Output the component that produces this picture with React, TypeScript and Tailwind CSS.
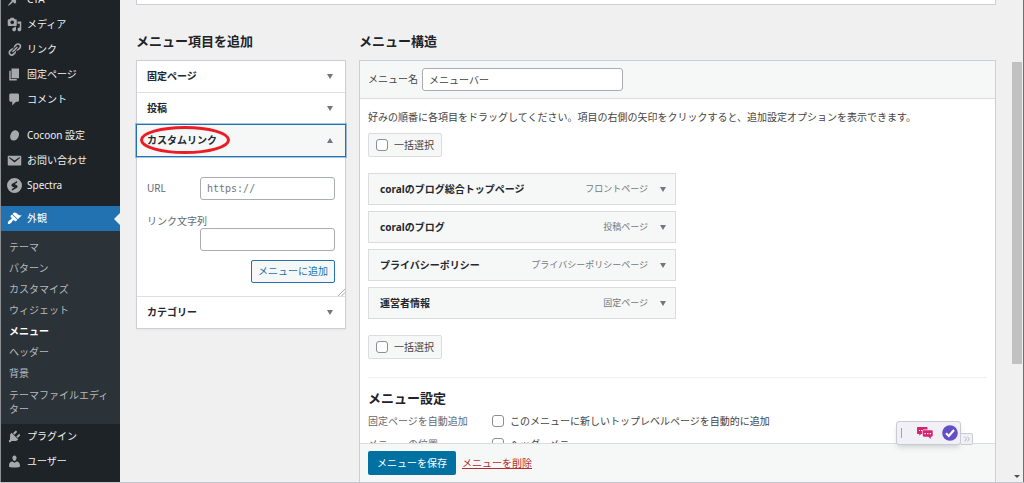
import React from "react";

const ICONS = {
  pin: "M10.44 3.02l1.82-1.82 6.36 6.35-1.83 1.82c-1.05-.68-2.48-.57-3.41.36l-.75.75c-.92.93-1.04 2.35-.35 3.41l-1.83 1.82-2.41-2.41-2.8 2.79c-.42.42-3.38 2.71-3.8 2.29s1.86-3.39 2.28-3.81l2.79-2.79L4.1 9.36l1.83-1.82c1.05.69 2.48.57 3.4-.36l.75-.75c.93-.92 1.05-2.35.36-3.41z",
  media:
    "M13 11V4c0-.55-.45-1-1-1h-1.67L9 1H5L3.67 3H2c-.55 0-1 .45-1 1v7c0 .55.45 1 1 1h10c.55 0 1-.45 1-1zM7 4.5c1.38 0 2.5 1.12 2.5 2.5S8.38 9.5 7 9.5 4.5 8.38 4.5 7 5.62 4.5 7 4.5zM14 6h5v10.5c0 1.38-1.12 2.5-2.5 2.5S14 17.88 14 16.5s1.12-2.5 2.5-2.5c.17 0 .34.02.5.05V9h-3V6zm-4 8.05V13h2v3.5c0 1.38-1.12 2.5-2.5 2.5S7 17.88 7 16.5 8.12 14 9.5 14c.17 0 .34.02.5.05z",
  link: "M17.74 2.76c1.68 1.69 1.68 4.41 0 6.1l-1.53 1.52c-1.12 1.12-2.7 1.47-4.14 1.09l2.62-2.61.76-.77.76-.76c.84-.84.84-2.2 0-3.04-.84-.85-2.2-.85-3.04 0l-.77.76-3.38 3.38c-.37-1.44-.02-3.02 1.1-4.14l1.52-1.53c1.69-1.68 4.42-1.68 6.1 0zM8.59 13.43l5.34-5.34c.42-.42.42-1.1 0-1.52-.44-.43-1.13-.39-1.53 0l-5.33 5.34c-.42.42-.42 1.1 0 1.52.44.43 1.13.39 1.52 0zm-.76 2.29l4.14-4.15c.38 1.44.03 3.02-1.09 4.14l-1.52 1.53c-1.69 1.68-4.41 1.68-6.1 0-1.68-1.68-1.68-4.42 0-6.1l1.53-1.52c1.12-1.12 2.7-1.47 4.14-1.1l-4.14 4.15c-.85.84-.85 2.2 0 3.05.84.84 2.2.84 3.04 0z",
  page: "M6 15V2h10v13H6zm-1 1h8v2H3V5h2v11z",
  comment:
    "M5 2h9c1.1 0 2 .9 2 2v7c0 1.1-.9 2-2 2h-2l-5 5v-5H5c-1.1 0-2-.9-2-2V4c0-1.1.9-2 2-2z",
  cocoon:
    "M12.5 3.2c3 .8 4.2 4 3.2 7.6-1.1 4-4.3 6.6-7.6 5.9-3.2-.7-4.7-3.9-3.6-7.5C5.7 5 9.2 2.3 12.5 3.2z",
  mail: "M2 3.5h16c.6 0 1 .4 1 1v11c0 .6-.4 1-1 1H2c-.6 0-1-.4-1-1v-11c0-.6.4-1 1-1zm8 9.2l7-5.7c.5-.6-.2-1.500-1-1.100l-6 4-6-4c-.8-.4-1.500.5-1 1.100z",
  spectra:
    "M10 0a10 10 0 1 1 0 20 10 10 0 0 1 0-20zm3.5 4L7 7.700c-1.500 1-1.500 2.700-.2 3.500l3 1.600L6.500 14.600V17l6.300-3.600c1.700-1 1.700-2.900.2-3.800l-2.800-1.500 3.300-1.900z",
  appearance:
    "M14.48 11.06L7.41 3.99l1.5-1.5c.5-.56 2.3-.47 3.51.32 1.21.8 1.43 1.28 2.91 2.1 1.18.64 2.45 1.26 4.45.85zm-.71.71L6.7 4.7 4.93 6.47c-.39.39-.39 1.02 0 1.41l1.06 1.06c.39.39.39 1.03 0 1.42-.6.6-1.43 1.11-2.21 1.69-.35.26-.7.53-1.01.84C1.43 14.23.4 16.08 1.4 17.07c.99 1 2.84-.03 4.18-1.36.31-.31.58-.66.85-1.02.57-.78 1.08-1.61 1.69-2.21.39-.39 1.02-.39 1.41 0l1.06 1.06c.39.39 1.02.39 1.41 0z",
  plugin:
    "M13.11 4.36L9.87 7.6 8 5.73l3.24-3.24c.35-.34 1.05-.2 1.56.32.52.51.66 1.21.31 1.55zm-8 1.77l.91-1.12 9.01 9.01-1.19.84c-.71.71-2.63 1.16-3.82 1.16H6.14L4.9 17.26c-.59.59-1.54.59-2.12 0-.59-.58-.59-1.53 0-2.12l1.24-1.24v-3.88c0-1.13.4-3.19 1.09-3.89zm7.26 3.97l3.24-3.24c.34-.35 1.04-.21 1.55.31.52.51.66 1.21.31 1.55l-3.24 3.25z",
  user: "M10 9.25c-2.27 0-2.73-3.44-2.73-3.44C7 4.02 7.82 2 9.97 2c2.16 0 2.98 2.02 2.71 3.81 0 0-.41 3.44-2.68 3.44zm0 2.57L12.72 10c2.39 0 4.52 2.33 4.52 4.53v2.49s-3.65 1.13-7.24 1.13c-3.65 0-7.24-1.13-7.24-1.13v-2.49c0-2.25 1.94-4.48 4.47-4.48z",
};

type IconName = keyof typeof ICONS;

const contentLinks: { icon: IconName; label: string }[] = [
  { icon: "media", label: "メディア" },
  { icon: "link", label: "リンク" },
  { icon: "page", label: "固定ページ" },
  { icon: "comment", label: "コメント" },
];

const pluginLinks: { icon: IconName; label: string }[] = [
  { icon: "cocoon", label: "Cocoon 設定" },
  { icon: "mail", label: "お問い合わせ" },
  { icon: "spectra", label: "Spectra" },
];

const subLinks = [
  "テーマ",
  "パターン",
  "カスタマイズ",
  "ウィジェット",
  "メニュー",
  "ヘッダー",
  "背景",
];

const menuItems = [
  { title: "coralのブログ総合トップページ", type: "フロントページ" },
  { title: "coralのブログ", type: "投稿ページ" },
  { title: "プライバシーポリシー", type: "プライバシーポリシーページ" },
  { title: "運営者情報", type: "固定ページ" },
];

function SideLink({
  icon,
  label,
  active,
}: {
  icon: IconName;
  label: string;
  active?: boolean;
}) {
  return (
    <a
      href="#"
      className={`relative flex h-[25px] shrink-0 items-center gap-[5px] pl-1.5 text-[10px] ${
        active ? "bg-[#2271b1] text-white" : "text-[#f0f0f1]"
      }`}
    >
      <svg
        viewBox="0 0 20 20"
        className={`size-[15px] ${active ? "text-white" : "text-[#a7aaad]"}`}
        fill="currentColor"
        fillRule="evenodd"
      >
        <path d={ICONS[icon]} />
      </svg>
      {label}
      {active && (
        <span className="absolute top-1/2 right-0 -translate-y-1/2 border-y-6 border-r-6 border-y-transparent border-r-[#f0f0f1]" />
      )}
    </a>
  );
}

function Sidebar() {
  return (
    <nav className="w-30 shrink-0 border-l border-[#8c8f94] bg-[#1d2327]">
      {/* the list is scrolled, only the tail of the first entry shows */}
      <div className="flex h-3 flex-col justify-end overflow-hidden">
        <SideLink icon="pin" label="CTA" />
      </div>
      {contentLinks.map((item) => (
        <SideLink key={item.label} {...item} />
      ))}
      <div className="pt-[11px] pb-2">
        {pluginLinks.map((item) => (
          <SideLink key={item.label} {...item} />
        ))}
      </div>
      <SideLink icon="appearance" label="外観" active />
      <div className="bg-[#2c3338] pt-1.5 pb-1 pl-2 text-[10px] text-[#b4b9be]">
        {subLinks.map((label) => (
          <a
            key={label}
            href="#"
            className={`flex h-[21px] items-center ${
              label === "メニュー" ? "font-bold text-white" : ""
            }`}
          >
            {label}
          </a>
        ))}
        <a href="#" className="block w-[102px] py-1 leading-[14px]">
          テーマファイルエディター
        </a>
      </div>
      <SideLink icon="plugin" label="プラグイン" />
      <SideLink icon="user" label="ユーザー" />
    </nav>
  );
}

function Arrow({ up }: { up?: boolean }) {
  return (
    <svg viewBox="0 0 6 5" className="h-[5px] w-1.5 shrink-0" fill="#72777c">
      <path d={up ? "M0 5h6L3 0z" : "M0 0h6L3 5z"} />
    </svg>
  );
}

function SectionButton({ label }: { label: string }) {
  return (
    <button className="flex h-[31px] w-full items-center justify-between pr-3 pl-2.5 text-[10px] font-bold text-[#23282d]">
      {label}
      <Arrow />
    </button>
  );
}

function AddItems() {
  return (
    <section className="w-[210px] shrink-0">
      <h2 className="text-[13px] leading-5 font-bold text-[#1d2327]">
        メニュー項目を追加
      </h2>
      <div className="mt-[9px] border border-[#ccd0d4] bg-white shadow-xs">
        <SectionButton label="固定ページ" />
        <div className="border-t border-[#dfdfdf]">
          <SectionButton label="投稿" />
        </div>
        <button className="relative -mx-px flex h-[33px] w-[210px] items-center justify-between border border-[#2271b1] bg-[#f6f7f7] pr-3 pl-2.5 text-[10px] font-bold text-[#23282d] ring-1 ring-[#2271b1]/40">
          カスタムリンク
          <Arrow up />
          <svg
            viewBox="0 0 92 30"
            className="absolute top-0 left-0.5 h-[30px] w-[92px]"
            fill="none"
            stroke="#ed1c24"
            strokeWidth="3"
          >
            <ellipse cx="46" cy="15" rx="43.5" ry="12.5" />
          </svg>
        </button>
        <div className="relative px-2.5 pt-5 pb-[13px] text-[10px] text-[#646970]">
          <div className="flex items-center justify-between">
            <label htmlFor="url">URL</label>
            <input
              id="url"
              placeholder="https://"
              className="h-[23px] w-[135px] rounded-[3px] border border-[#a9acb1] px-1.5 font-['DejaVu_Sans_Mono',monospace] text-[10px] placeholder:text-[#72777c]"
            />
          </div>
          <label htmlFor="link-text" className="mt-3.5 block leading-[14px]">
            リンク文字列
          </label>
          <input
            id="link-text"
            className="ml-auto block h-[23px] w-[135px] rounded-[3px] border border-[#a9acb1] px-1.5"
          />
          <button className="mt-[9px] ml-auto block h-[23px] rounded-xs border border-[#2271b1] bg-[#f6f7f7] px-1.5 text-[#2271b1]">
            メニューに追加
          </button>
          <svg
            viewBox="0 0 7 7"
            className="absolute right-0 bottom-0 size-[7px]"
            stroke="#8c8f94"
            strokeWidth="0.8"
          >
            <path d="M0 7L7 0M3.5 7L7 3.5" />
          </svg>
        </div>
        <div className="border-t border-[#dfdfdf]">
          <SectionButton label="カテゴリー" />
        </div>
      </div>
    </section>
  );
}

const checkbox =
  "size-3 appearance-none rounded-[3px] border border-[#8c8f94] bg-white";

function BulkSelect() {
  return (
    <label className="flex h-6 w-[74px] items-center gap-1.5 rounded-xs border border-[#dcdcde] bg-[#f6f7f7] pl-[7px] whitespace-nowrap">
      <input type="checkbox" className={checkbox} />
      一括選択
    </label>
  );
}

function MenuStructure() {
  return (
    <section className="flex min-w-0 flex-1 flex-col">
      <h2 className="text-[13px] leading-5 font-bold text-[#1d2327]">
        メニュー構造
      </h2>
      <div className="mt-[9px] flex min-h-0 flex-1 flex-col border border-b-0 border-[#ccd0d4] bg-white text-[10px] text-[#444]">
        <div className="flex h-[38px] shrink-0 items-center gap-1 border-b border-[#dcdcde] bg-[#f6f7f7] px-2">
          <label htmlFor="menu-name">メニュー名</label>
          <input
            id="menu-name"
            defaultValue="メニューバー"
            className="h-[23px] w-[201px] rounded-[3px] border border-[#a9acb1] bg-white px-1.5"
          />
        </div>
        <div className="min-h-0 flex-1 overflow-hidden px-2 pt-2.5">
          <p className="leading-4">
            好みの順番に各項目をドラッグしてください。項目の右側の矢印をクリックすると、追加設定オプションを表示できます。
          </p>
          <div className="mt-2">
            <BulkSelect />
          </div>
          <ul className="mt-4 flex w-[308px] flex-col gap-1.5">
            {menuItems.map((item) => (
              <li
                key={item.title}
                className="flex h-8 items-center border border-[#dcdcde] bg-[#f6f7f7] pr-[9px] pl-[11px]"
              >
                <span className="flex-1 font-bold text-[#23282d]">
                  {item.title}
                </span>
                <span className="mr-3 text-[9px] text-[#72777c]">
                  {item.type}
                </span>
                <Arrow />
              </li>
            ))}
          </ul>
          <div className="mt-4">
            <BulkSelect />
          </div>
          <hr className="mt-[18px] border-[#f0f0f1]" />
          <h3 className="mt-2.5 text-[13px] leading-5 font-bold text-[#1d2327]">
            メニュー設定
          </h3>
          <fieldset className="mt-[5px] flex h-4 items-center">
            <legend className="float-left w-[124px] text-[#646970]">
              固定ページを自動追加
            </legend>
            <label className="flex items-center gap-1.5">
              <input type="checkbox" className={checkbox} />
              このメニューに新しいトップレベルページを自動的に追加
            </label>
          </fieldset>
          <fieldset className="mt-[7px] flex h-4 items-center">
            <legend className="float-left w-[124px] text-[#646970]">
              メニューの位置
            </legend>
            <label className="flex items-center gap-1.5">
              <input type="checkbox" className={checkbox} />
              ヘッダーメニュー
            </label>
          </fieldset>
        </div>
        <div className="flex h-[39px] shrink-0 items-center gap-1.5 border-t border-[#dcdcde] bg-[#f6f7f7] px-2">
          <button className="h-6 rounded-xs bg-[#0071a1] px-[9px] text-white">
            メニューを保存
          </button>
          <a href="#" className="text-[#b32d2e] underline">
            メニューを削除
          </a>
        </div>
      </div>
    </section>
  );
}

function FloatingToolbar() {
  return (
    <div className="absolute right-[51px] bottom-[37px] flex items-end">
      <div className="flex h-6 w-[65px] items-center rounded-[3px] border border-[#c9cad6] bg-[#f0f0f6] pl-1 shadow-md">
        <span className="h-2.5 w-px bg-[#a0a1ad]" />
        <svg viewBox="0 0 16 12" className="ml-[15px] h-3 w-4">
          <path
            d="M1 0h8.500c.6 0 1 .4 1 1v1.500H7c-1.100 0-1.800.8-1.800 1.800V7H4L2.300 8.700V7H1C.4 7 0 6.600 0 6V1c0-.6.4-1 1-1z"
            fill="#d6246e"
          />
          <path
            d="M7 3.300h7.500c.7 0 1.200.5 1.200 1.200v4c0 .7-.5 1.200-1.200 1.200h-.8V12l-2.300-2.300H7c-.7 0-1.200-.5-1.200-1.200v-4c0-.7.5-1.200 1.200-1.200z"
            fill="#d6246e"
          />
          <path
            d="M7.500 6h1.300v1.200H7.500zM10.100 6h1.300v1.200h-1.300zM12.700 6H14v1.200h-1.300zM2 3h1v1H2zM4 3h1v1H4z"
            fill="#fff"
          />
        </svg>
        <svg viewBox="0 0 16 16" className="ml-[9px] size-4" fill="none">
          <circle cx="8" cy="8" r="7.8" fill="#6250c4" />
          <path d="M4 8.300l2.800 2.700L12 5" stroke="#fff" strokeWidth="2.2" />
        </svg>
      </div>
      <div className="flex h-3 w-3 items-center justify-center rounded-r-xs border border-l-0 border-[#c9cad6] bg-[#f0f0f6]">
        <svg
          viewBox="0 0 6 6"
          className="size-1.5"
          fill="none"
          stroke="#b4b5c4"
          strokeWidth="0.9"
        >
          <path d="M.5.5L2.500 3l-2 2.500M3.300.5l2 2.500-2 2.500" />
        </svg>
      </div>
    </div>
  );
}

function Scrollbar() {
  return (
    <div className="relative w-3 shrink-0 border-r border-[#6b7075] pt-[62px]">
      <div className="h-[302px] w-2.5 bg-[#c1c1c1]" />
      <svg
        viewBox="0 0 6 3"
        className="absolute bottom-1 left-0.5 h-[3px] w-1.5"
        fill="#505050"
      >
        <path d="M0 0h6L3 3z" />
      </svg>
    </div>
  );
}

export default function App() {
  return (
    <div className="flex h-screen flex-col overflow-hidden border-b border-[#c3c7cb] bg-[#f0f0f1] font-['Noto_Sans','Noto_Sans_CJK_JP',sans-serif]">
      <div className="relative flex min-h-0 flex-1">
        <Sidebar />
        <main className="flex min-w-0 flex-1 flex-col px-4">
          <div className="h-[5px] shrink-0 border border-t-0 border-[#ccd0d4] bg-white" />
          <div className="mt-[26px] flex min-h-0 flex-1 items-stretch gap-[13px]">
            <AddItems />
            <MenuStructure />
          </div>
        </main>
        <Scrollbar />
        <FloatingToolbar />
      </div>
    </div>
  );
}
